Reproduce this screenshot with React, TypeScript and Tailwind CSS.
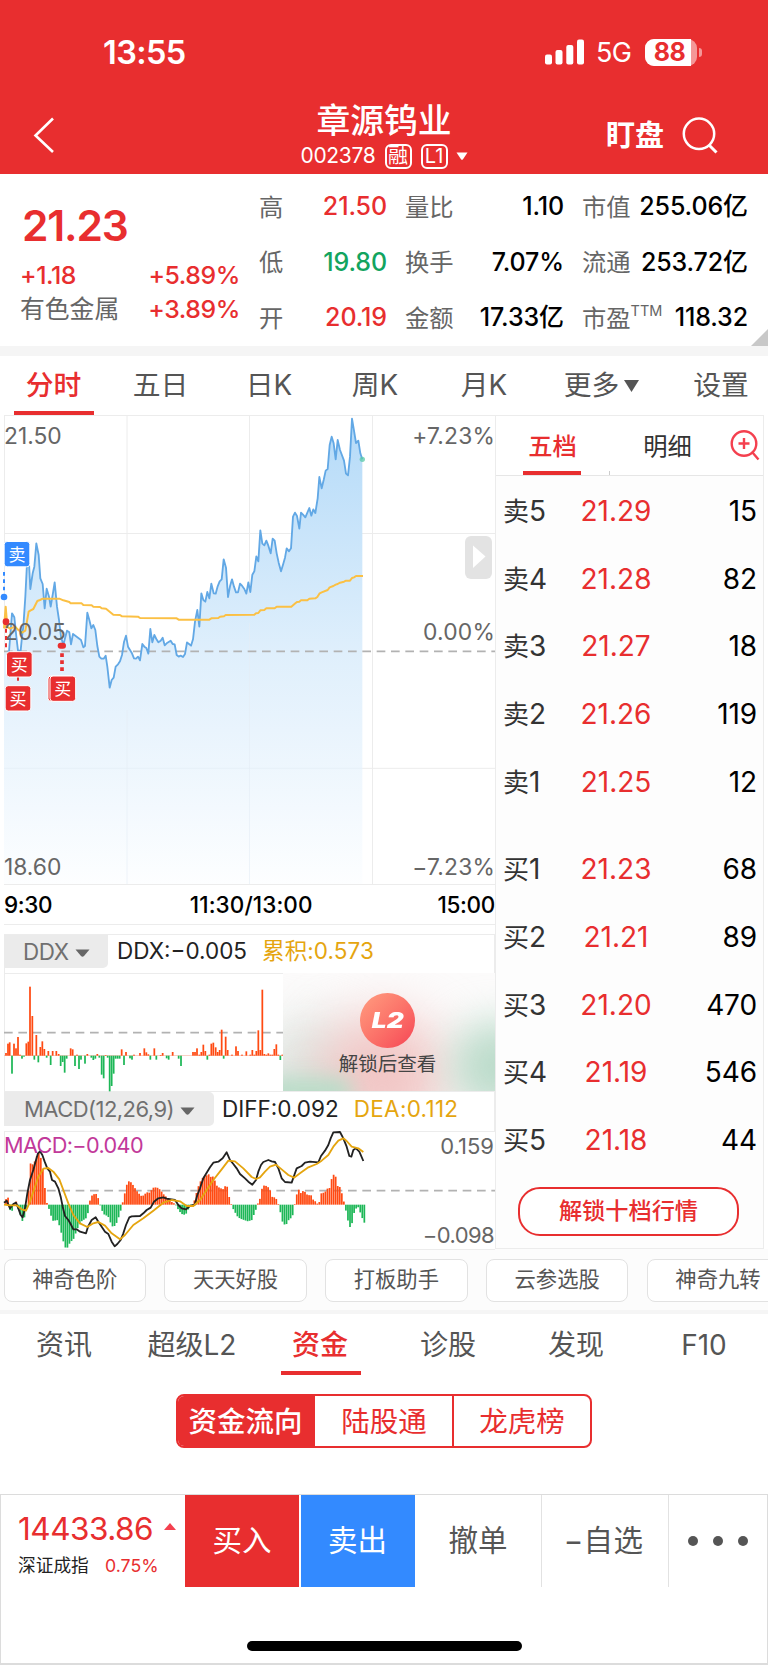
import React from "react";
import clsx from "clsx";

// plot data, three units per css pixel
const PRICE =
  "22,725 27,725 36,610 43,622 49,680 54,722 62,722 66,680 70,650 76,560 82,440 86,440 91,537 98,490 103,470 109,400 116,435 121,505 128,522 134,595 140,536 147,560 152,590 158,555 164,517 171,590 177,630 183,680 190,705 195,685 201,662 208,667 213,703 219,672 243,690 250,712 255,708 262,608 268,630 274,655 280,645 286,660 292,708 298,740 304,746 311,746 317,737 322,770 329,833 335,810 341,803 347,770 354,763 360,754 366,735 372,696 378,677 384,710 395,728 402,745 408,746 414,740 420,751 427,702 433,710 439,714 445,731 451,657 457,697 463,675 469,687 475,697 482,692 488,683 494,706 500,700 512,692 518,702 524,703 530,735 536,740 542,737 549,741 555,732 561,697 567,702 573,707 579,688 585,635 592,600 598,650 604,550 610,570 616,575 622,546 628,565 634,521 641,550 647,551 653,529 659,514 665,508 671,448 678,473 684,561 690,529 696,508 702,530 708,547 714,547 720,521 726,527 733,537 739,551 745,517 751,546 757,494 763,484 769,439 775,454 781,361 787,401 793,406 799,392 805,407 812,430 818,386 824,392 830,430 836,458 843,484 849,464 855,443 860,415 867,424 873,415 879,320 885,308 891,318 898,356 903,308 909,314 916,322 928,294 934,317 940,298 946,309 953,265 958,201 965,235 971,210 977,182 983,177 989,105 995,80 1001,100 1007,148 1013,90 1020,120 1032,152 1038,191 1044,196 1050,140 1056,26 1062,62 1068,99 1075,92 1081,130 1087,148";

const AVERAGE =
  "12,655 17,590 22,650 30,656 45,650 55,660 66,668 76,662 86,605 92,601 100,597 106,585 112,573 120,570 128,566 178,566 190,571 208,576 212,580 245,580 250,585 275,586 280,590 300,591 305,595 318,596 340,614 360,615 366,619 414,620 420,624 530,625 536,629 628,629 634,625 655,624 660,620 672,619 677,615 763,614 768,610 775,609 781,601 793,600 799,595 824,595 830,590 874,590 886,580 891,576 898,575 903,571 922,571 928,566 946,565 952,561 959,550 965,547 983,540 989,532 1000,528 1007,524 1013,522 1020,518 1032,515 1038,512 1050,512 1056,504 1062,502 1068,498 1089,498";

const DDX: [number, number][] = [
  [18, 609], [24, 581], [29, 577], [36, 671], [42, 581], [48, 595], [54, 561], [60, 614], [66, 626], [72, 620],
  [79, 580], [85, 575], [90, 410], [97, 498], [103, 629], [109, 555], [115, 637], [121, 591], [127, 574], [133, 597],
  [140, 623], [145, 603], [152, 645], [158, 603], [169, 603], [176, 612], [182, 648], [188, 636], [194, 668], [200, 626],
  [212, 595], [218, 598], [225, 648], [231, 614], [237, 657], [243, 629], [255, 641], [262, 612], [274, 623], [280, 630],
  [286, 626], [292, 612], [298, 623], [305, 674], [311, 685], [317, 615], [323, 623], [329, 724], [335, 708], [341, 671],
  [347, 626], [353, 626], [359, 626], [365, 598], [372, 645], [378, 606], [390, 625], [396, 629], [402, 614], [420, 609],
  [433, 595], [439, 607], [445, 613], [451, 629], [463, 595], [469, 629], [482, 615], [488, 609], [500, 625], [506, 629],
  [518, 606], [536, 626], [543, 648], [579, 606], [585, 606], [591, 595], [598, 614], [604, 606], [610, 584], [616, 603],
  [622, 629], [628, 614], [634, 581], [640, 578], [647, 592], [653, 606], [659, 600], [665, 539], [671, 626], [677, 560],
  [683, 600], [696, 614], [708, 589], [714, 603], [726, 614], [739, 604], [751, 614], [757, 600], [763, 614], [769, 603],
  [775, 541], [781, 600], [787, 419], [793, 612], [799, 614], [805, 610], [811, 614], [817, 614], [823, 597], [829, 583],
  [835, 614], [841, 630], [847, 614],
];

// envelope of the MACD histogram
const MACD: [number, number][] = [
  [15, 360], [24, 352], [30, 390], [36, 394], [42, 370], [48, 362], [54, 385], [60, 400], [66, 424], [72, 418],
  [78, 390], [82, 374], [85, 340], [91, 250], [97, 254], [103, 247], [109, 232], [115, 215], [121, 228], [127, 252],
  [133, 308], [139, 364], [145, 380], [151, 400], [157, 420], [163, 426], [169, 415], [176, 430], [182, 450], [188, 476],
  [194, 500], [200, 507], [206, 496], [212, 484], [218, 482], [224, 470], [230, 450], [243, 425], [262, 412], [268, 368],
  [274, 348], [286, 340], [292, 345], [298, 368], [304, 385], [310, 402], [322, 408], [328, 414], [334, 438], [340, 440],
  [347, 436], [353, 420], [360, 400], [366, 376], [371, 355], [377, 328], [383, 304], [390, 304], [396, 310], [402, 320],
  [414, 338], [426, 350], [439, 338], [445, 336], [451, 340], [457, 322], [463, 324], [469, 321], [475, 325], [482, 330],
  [488, 340], [500, 352], [512, 364], [524, 371], [530, 378], [536, 392], [548, 404], [557, 404], [567, 384], [580, 374],
  [586, 350], [598, 310], [610, 290], [622, 285], [628, 282], [634, 294], [640, 288], [646, 306], [652, 320], [665, 326],
  [671, 328], [677, 315], [683, 322], [689, 360], [695, 376], [701, 390], [714, 412], [726, 418], [744, 424], [756, 420],
  [762, 403], [768, 388], [775, 366], [781, 354], [787, 320], [793, 316], [799, 318], [805, 322], [811, 332], [817, 352],
  [824, 352], [830, 358], [836, 376], [842, 400], [848, 428], [854, 434], [860, 432], [866, 420], [873, 414], [879, 404],
  [885, 368], [891, 340], [897, 328], [903, 340], [909, 333], [916, 336], [922, 345], [934, 346], [940, 360], [946, 364],
  [952, 371], [958, 366], [964, 340], [971, 338], [977, 334], [983, 325], [989, 324], [995, 296], [1001, 284], [1007, 290],
  [1013, 318], [1019, 320], [1025, 338], [1031, 362], [1037, 388], [1043, 418], [1049, 442], [1055, 436], [1061, 402],
  [1067, 388], [1073, 378], [1079, 392], [1085, 410], [1093, 428],
];

const DIFF =
  "12,368 20,362 30,385 40,372 48,368 55,385 62,405 68,412 75,385 82,340 90,300 100,270 108,240 114,220 120,214 127,225 134,245 142,265 150,275 156,300 165,305 175,325 182,350 188,380 195,408 205,420 212,432 220,448 230,448 240,455 258,460 264,440 275,420 287,412 295,425 305,440 315,455 325,462 335,485 344,499 352,492 362,480 370,460 378,435 388,412 395,409 420,408 430,400 440,390 452,383 462,365 475,355 490,352 500,356 525,360 535,375 545,385 558,388 570,378 584,374 592,345 600,325 610,295 620,278 630,262 640,248 655,245 668,235 680,217 690,240 700,252 710,265 720,282 735,295 745,305 757,314 768,300 775,275 783,255 790,246 805,240 815,244 825,246 835,265 845,295 855,306 875,308 883,285 890,265 905,258 915,248 930,245 955,247 963,228 975,212 985,195 992,175 1000,157 1020,156 1030,175 1040,200 1048,228 1054,230 1060,210 1068,205 1078,215 1090,243";

const DEA =
  "12,374 30,376 50,376 65,388 78,392 88,370 100,335 115,290 130,266 145,264 160,275 178,298 190,330 205,370 220,405 240,430 262,441 280,430 295,426 315,437 335,460 360,478 375,465 400,435 430,415 460,392 490,368 515,360 540,364 560,378 580,378 600,360 620,330 640,300 665,268 685,242 705,244 730,265 755,291 768,297 780,292 795,275 810,260 828,254 845,268 865,285 882,293 900,280 925,262 950,252 965,242 985,225 1000,200 1015,182 1030,175 1040,183 1055,200 1075,205 1090,216";

function valueAt(x: number) {
  for (let i = 1; i < MACD.length; i++) {
    const [x0, y0] = MACD[i - 1];
    const [x1, y1] = MACD[i];
    if (x <= x1) return y0 + ((y1 - y0) * (x - x0)) / (x1 - x0);
  }
  return MACD[MACD.length - 1][1];
}

const MACD_BARS = Array.from({ length: 176 }, (_, i) => {
  const x = 18 + i * 6.143;
  return [x, valueAt(x)] as [number, number];
});

function Bars({ data, base }: { data: [number, number][]; base: number }) {
  return (
    <>
      {data.map(([x, y]) => (
        <rect
          key={x}
          x={x - 2.6}
          y={Math.min(y, base)}
          width={5.2}
          height={Math.max(Math.abs(y - base), 2)}
          fill={y < base ? "#ff4a12" : "#1db757"}
        />
      ))}
    </>
  );
}

function StatusBar() {
  return (
    <div className="flex h-[104px] items-center pl-[103px] pr-[66px] text-white">
      <span className="w-[442px] pt-[2px] text-[32.5px] leading-none font-semibold tracking-[-0.6px]">13:55</span>
      <svg width="40" height="26" viewBox="0 0 40 26" fill="currentColor">
        <rect x="0" y="15.5" width="7" height="10" rx="2" />
        <rect x="10.5" y="11" width="7" height="14.5" rx="2" />
        <rect x="21.3" y="6" width="7" height="19.5" rx="2" />
        <rect x="32" y="0.5" width="7" height="25" rx="2" />
      </svg>
      <span className="ml-[11px] pt-[2px] text-[27px] leading-[32px] tracking-[-0.6px]">5G</span>
      <div className="mr-[5px] ml-auto flex h-[27px] w-[52px] items-center rounded-[9px] bg-white/50">
        <span className="flex h-full w-[46px] items-center justify-center rounded-l-[9px] bg-white pl-[3px] text-[25px] leading-[27px] font-bold tracking-[-0.5px] text-[#e82e2f]">88</span>
      </div>
      <span className="-ml-[3px] h-[9px] w-[3px] rounded-r-full bg-white/50" />
    </div>
  );
}

function TitleBar() {
  return (
    <div className="flex h-[70px] text-white">
      <svg className="ml-[32px] mt-[13px]" width="24" height="36" viewBox="0 0 24 36" fill="none" stroke="currentColor" strokeWidth="2.6">
        <path d="M21 1.5 3.5 18.5 21 35" />
      </svg>
      <div className="ml-[204px] flex w-[248px] flex-col items-center">
        <h1 className="text-[33.8px] leading-[34px] font-medium">章源钨业</h1>
        <div className="mt-[5px] flex items-center whitespace-nowrap">
          <span className="text-[21px] leading-[26px] tracking-[-0.3px]">002378</span>
          <span className="ml-[9px] flex h-[25px] w-[27px] items-center justify-center rounded-[6px] border-2 border-white text-[20px] leading-none">融</span>
          <span className="ml-[9px] flex h-[25px] w-[27px] items-center justify-center rounded-[6px] border-2 border-white text-[20px] leading-none">L1</span>
          <svg className="ml-[8px]" width="12" height="8" viewBox="0 0 12 8" fill="currentColor">
            <path d="M0.5 0.5h11L7 7.3q-1 1-2 0z" />
          </svg>
        </div>
      </div>
      <span className="ml-[98px] mt-[17px] text-[29px] leading-[29px] font-bold">盯盘</span>
      <svg className="ml-[17px] mt-[13px]" width="38" height="38" viewBox="0 0 38 38" fill="none" stroke="currentColor" strokeWidth="2.5">
        <circle cx="18" cy="16.8" r="15.2" />
        <path d="M28.500 28.500 35.500 35.500" strokeWidth="3" />
      </svg>
    </div>
  );
}

type Stat = { label: React.ReactNode; value: string; tone?: string };

function StatColumn({ items, className }: { items: Stat[]; className: string }) {
  return (
    <div className={clsx("flex flex-col", className)}>
      {items.map((item, i) => (
        <div key={i} className="flex h-[55.500px] items-center justify-between whitespace-nowrap">
          <span className="text-[24.3px] leading-none text-[#666]">{item.label}</span>
          <span className={clsx("text-[25px] leading-none font-medium tracking-[-0.1px]", item.tone ?? "text-black")}>{item.value}</span>
        </div>
      ))}
    </div>
  );
}

function Quote() {
  return (
    <section className="relative flex h-[172px] bg-white">
      <div className="w-[240px] pl-[20px] pt-[30px] font-medium text-[#e82e2f]">
        <div className="pl-[2px] text-[42.5px] leading-[43px] font-semibold tracking-[-1.2px]">21.23</div>
        <div className="mt-[12px] flex h-[34px] items-center justify-between text-[24.8px] tracking-[-0.4px]">
          <span>+1.18</span>
          <span>+5.89%</span>
        </div>
        <div className="flex h-[34px] items-center justify-between text-[24.8px] tracking-[-0.4px]">
          <span className="font-normal tracking-normal text-[#666]">有色金属</span>
          <span>+3.89%</span>
        </div>
      </div>
      <StatColumn
        className="ml-[19px] w-[128px] pt-[5px]"
        items={[
          { label: "高", value: "21.50", tone: "text-[#e82e2f]" },
          { label: "低", value: "19.80", tone: "text-[#12a45f]" },
          { label: "开", value: "20.19", tone: "text-[#e82e2f]" },
        ]}
      />
      <StatColumn
        className="ml-[18px] w-[159px] pt-[5px]"
        items={[
          { label: "量比", value: "1.10" },
          { label: "换手", value: "7.07%" },
          { label: "金额", value: "17.33亿" },
        ]}
      />
      <StatColumn
        className="ml-[18px] w-[166px] pt-[5px]"
        items={[
          { label: "市值", value: "255.06亿" },
          { label: "流通", value: "253.72亿" },
          { label: <>市盈<span className="relative -top-[11px] text-[14.500px]">TTM</span></>, value: "118.32" },
        ]}
      />
      <svg className="absolute right-0 bottom-0" width="17" height="17" viewBox="0 0 17 17">
        <path d="M17 0v17H0z" fill="#c8c8c8" />
      </svg>
    </section>
  );
}

function PeriodTabs() {
  return (
    <nav className="flex h-[59px] overflow-hidden bg-white text-[27.8px] leading-none text-[#555]">
      <span className="relative flex w-[107px] shrink-0 items-center justify-center pt-px font-medium text-[#e82e2f]">
        分时
        <i className="absolute bottom-0 left-[14px] h-[4px] w-[80px] bg-[#e82e2f]" />
      </span>
      <span className="flex w-[107px] shrink-0 items-center justify-center pt-px">五日</span>
      <span className="flex w-[110px] shrink-0 items-center justify-center pt-px">日K</span>
      <span className="flex w-[102px] shrink-0 items-center justify-center pt-px">周K</span>
      <span className="flex w-[116px] shrink-0 items-center justify-center pt-px">月K</span>
      <span className="flex w-[119px] shrink-0 items-center justify-center pt-px">
        更多
        <svg className="ml-[5px]" width="15" height="12" viewBox="0 0 15 12" fill="#555">
          <path d="M0 0h15L7.5 12z" />
        </svg>
      </span>
      <span className="flex w-[120px] shrink-0 items-center justify-center pt-px">设置</span>
    </nav>
  );
}

function Tag({ x, y, text, fill }: { x: number; y: number; text: string; fill: string }) {
  return (
    <g>
      <rect x={x} y={y} width="77" height="76" rx="9" fill={fill} stroke="#fff" strokeWidth="3" />
      <text x={x + 38.5} y={y + 57} textAnchor="middle" fontSize="51" fill="#fff">{text}</text>
    </g>
  );
}

function PriceChart() {
  return (
    <div className="relative h-[470px] text-[22.8px] leading-none text-[#666]">
      <svg className="block overflow-visible" width="491" height="470" viewBox="12 15 1473 1410" fill="none">
        <defs>
          <linearGradient id="area" x1="0" y1="26" x2="0" y2="1425" gradientUnits="userSpaceOnUse">
            <stop offset="0" stopColor="#b4daf8" />
            <stop offset="0.5" stopColor="#dfeffc" />
            <stop offset="1" stopColor="#fdfeff" />
          </linearGradient>
        </defs>
        <path d="M12 370.5H1485M12 1075H1485M13.500 15V1425M381 15V1425M748.500 15V1425M1117.500 15V1425" stroke="#ececec" strokeWidth="3" />
        <path d={`M12,1425 L12,725 L${PRICE} L1087,1425Z`} fill="url(#area)" />
        <path d="M381 900V1425M748.500 640V1425M12 1075H1087" stroke="#e4edf5" strokeWidth="3" opacity="0.6" />
        <path d="M12 16.500H1485M12 1423.500H1485" stroke="#ececec" strokeWidth="3" />
        <path d="M12 724H1485" stroke="#b2b2b2" strokeWidth="5" strokeDasharray="26 17" />
        <polyline points={PRICE} stroke="#62a8e5" strokeWidth="5.500" strokeLinejoin="round" />
        <path d="M12 655 18 590 24 655Z" fill="#fbb93a" />
        <polyline points={AVERAGE} stroke="#fbc044" strokeWidth="6" strokeLinejoin="round" />
        <circle cx="1087" cy="148" r="8" fill="#59c9a8" fillOpacity="0.75" />
      </svg>
      <span className="absolute left-0 top-[10px]">21.50</span>
      <span className="absolute right-0 top-[10px] tracking-[0.2px]">+7.23%</span>
      <span className="absolute left-0 top-[206px]">20.05</span>
      <span className="absolute right-0 top-[206px] tracking-[0.2px]">0.00%</span>
      <span className="absolute left-0 top-[441px]">18.60</span>
      <span className="absolute right-0 top-[441px] tracking-[0.2px]">−7.23%</span>
      {/* trade marks lie over the axis labels */}
      <svg className="absolute left-0 top-0 overflow-visible" width="491" height="470" viewBox="12 15 1473 1410" fill="none">
        <path d="M12 486V550" stroke="#338aff" strokeWidth="6" strokeDasharray="11 11" />
        <circle cx="12" cy="561" r="10" fill="#338aff" />
        <Tag x={12.500} y={394.500} text="卖" fill="#338aff" />
        <path d="M18 656V720M54 800V812" stroke="#e82e2f" strokeWidth="6" strokeDasharray="12 10" />
        <circle cx="18" cy="635" r="10" fill="#e82e2f" />
        <path d="M186 730V785" stroke="#e82e2f" strokeWidth="11" strokeDasharray="11 10" />
        <rect x="173" y="698" width="25" height="18" rx="9" fill="#e82e2f" />
        <Tag x={19.500} y={725} text="买" fill="#e82e2f" />
        <Tag x={15.500} y={827} text="买" fill="#e82e2f" />
        <Tag x={144} y={798} text="买" fill="#e82e2f" />
        <Tag x={150} y={798} text="买" fill="#e82e2f" />
      </svg>
      <svg className="absolute right-[3px] top-[121px]" width="27" height="43" viewBox="0 0 27 43">
        <rect width="27" height="43" rx="6" fill="#e3e3e3" />
        <path d="M8 9.500 20.500 20.500 8 32z" fill="#fff" />
      </svg>
    </div>
  );
}

function Caret() {
  return (
    <svg className="mt-[3px]" width="15" height="8" viewBox="0 0 15 8" fill="#666">
      <path d="M0.5 0.5h14L9 7q-1.500 1.500-3 0z" />
    </svg>
  );
}

function DdxChart() {
  return (
    <>
      <div className="flex h-[39px] border-t border-r border-l border-[#ececec] text-[22.5px] leading-[32px] whitespace-nowrap">
        <div className="-ml-px flex h-[33px] w-[104px] items-center rounded-br-[5px] bg-[#ebebeb] pl-[19px] text-[22.4px] text-[#707070]">
          <span className="w-[52px] tracking-[-0.4px]">DDX</span>
          <Caret />
        </div>
        <span className="ml-[9px] text-[#222]">DDX:−0.005</span>
        <span className="ml-[15px] tracking-[0.1px] text-[#e5a50f]">累积:0.573</span>
      </div>
      <div className="relative h-[118px]">
        <svg className="block overflow-visible" width="491" height="118" viewBox="12 369 1473 354" fill="none">
          <path d="M12 370.500H1485M13.500 369V723" stroke="#ececec" strokeWidth="3" />
          <path d="M12 548H1485" stroke="#b2b2b2" strokeWidth="5" strokeDasharray="26 17" />
          <path d="M12 616.500H848" stroke="#f6a08a" strokeWidth="1.500" />
          <Bars data={DDX} base={617} />
        </svg>
        <div className="absolute top-0 right-0 h-[118px] w-[212px] overflow-hidden bg-[#fcfbfb]">
          <div className="absolute top-[46px] left-[-30px] h-[110px] w-[110px] rounded-full bg-[#dfe6e1] blur-[24px]" />
          <div className="absolute top-[42px] left-[34px] h-[120px] w-[130px] rounded-full bg-[#f1c6c5] blur-[26px]" />
          <div className="absolute top-[104px] left-[-20px] h-[30px] w-[90px] rounded-full bg-[#b9dcc8] blur-[10px]" />
          <div className="absolute top-[48px] left-[168px] h-[90px] w-[90px] rounded-full bg-[#bbdbca] blur-[20px]" />
          <div className="relative flex flex-col items-center pt-[20px] pr-[3px]">
            <div className="flex size-[55px] items-center justify-center rounded-full bg-linear-to-br from-[#ff9d80] to-[#f54255]">
              <span className="scale-x-[1.25] text-[21px] leading-none font-black text-white italic">L2</span>
            </div>
            <span className="mt-[3px] text-[19.5px] leading-[26px] text-[#444]">解锁后查看</span>
          </div>
        </div>
      </div>
    </>
  );
}

function MacdChart() {
  return (
    <>
      <div className="flex h-[40px] border-t border-r border-[#ececec] text-[22.5px] leading-[33px] whitespace-nowrap">
        <div className="flex h-[34px] w-[210px] items-center rounded-r-[5px] bg-[#ebebeb] pl-[20px] text-[22px] text-[#707070]">
          <span className="w-[156px] tracking-[-0.55px]">MACD(12,26,9)</span>
          <Caret />
        </div>
        <span className="ml-[8px] text-[#222]">DIFF:0.092</span>
        <span className="ml-[15px] tracking-[0.3px] text-[#e5a50f]">DEA:0.112</span>
      </div>
      <div className="relative h-[119px] text-[22px] leading-none text-[#666]">
        <svg className="block overflow-visible" width="491" height="119" viewBox="12 153 1473 357" fill="none">
          <path d="M12 154.500H1485M13.500 153V510M12 508.500H1485" stroke="#ececec" strokeWidth="3" />
          <path d="M12 332H1485" stroke="#b2b2b2" strokeWidth="5" strokeDasharray="26 17" />
          <Bars data={MACD_BARS} base={374} />
          <polyline points={DIFF} stroke="#222" strokeWidth="5.500" strokeLinejoin="round" />
          <polyline points={DEA} stroke="#e5a50f" strokeWidth="5.500" strokeLinejoin="round" />
        </svg>
        <span className="absolute top-[4px] left-0 text-[21.700px] tracking-[-0.650px] text-[#c2399a]">MACD:−0.040</span>
        <span className="absolute top-[4px] right-px">0.159</span>
        <span className="absolute right-px bottom-[4px] tracking-[-0.6px]">−0.098</span>
      </div>
    </>
  );
}

const SELLS = [
  ["卖5", "21.29", "15"],
  ["卖4", "21.28", "82"],
  ["卖3", "21.27", "18"],
  ["卖2", "21.26", "119"],
  ["卖1", "21.25", "12"],
];

const BUYS = [
  ["买1", "21.23", "68"],
  ["买2", "21.21", "89"],
  ["买3", "21.20", "470"],
  ["买4", "21.19", "546"],
  ["买5", "21.18", "44"],
];

function Orders({ rows }: { rows: string[][] }) {
  return (
    <div>
      {rows.map(([name, price, volume]) => (
        <div key={name} className="flex h-[67.7px] items-center pr-[6px] pl-[7px] text-[28px] leading-none">
          <span className="w-[67px] text-[26px] text-[#333]"><span>{name[0]}</span><span className="text-[28px]">{name[1]}</span></span>
          <span className="w-[92px] text-center text-[#e82e2f]">{price}</span>
          <span className="flex-1 text-right tracking-[-0.1px] text-black">{volume}</span>
        </div>
      ))}
    </div>
  );
}

function OrderBook() {
  return (
    <aside className="flex h-[834px] w-[269px] flex-col border border-[#ececec] bg-[#fdfdfd]">
      <div className="flex h-[60px] border-b border-[#e6e6e6] bg-white text-[24.3px] leading-none">
        <span className="relative flex w-[113px] items-center justify-center pt-[2px] font-medium text-[#e82e2f]">
          五档
          <i className="absolute bottom-0 left-[27px] h-[4px] w-[58px] bg-[#e82e2f]" />
        </span>
        <i className="h-[4px] w-px self-end bg-[#ccc]" />
        <span className="flex w-[115px] items-center justify-center pt-[2px] text-[#333]">明细</span>
        <svg className="mt-[12px] ml-[5px]" width="32" height="34" viewBox="0 0 32 34" fill="none" stroke="#f4404f" strokeWidth="2.4">
          <circle cx="14" cy="15.500" r="12.300" />
          <path d="M14 10v11M8.500 15.500h11M22.500 24.500 28.500 31.500" />
        </svg>
      </div>
      <div className="pt-[1px]">
        <Orders rows={SELLS} />
      </div>
      <div className="mt-[20px]">
        <Orders rows={BUYS} />
      </div>
      <button className="mt-[13px] ml-[22px] h-[49px] w-[221px] rounded-[22px] border-2 border-[#e82e2f] bg-white pt-px text-[23.2px] leading-none font-medium text-[#e82e2f]">
        解锁十档行情
      </button>
    </aside>
  );
}

function Chips() {
  return (
    <div className="flex h-[61px] gap-[18.300px] overflow-hidden bg-[#fcfcfc] pt-[9.500px] pl-[3.500px]">
      {["神奇色阶", "天天好股", "打板助手", "云参选股", "神奇九转"].map((name) => (
        <span key={name} className="flex h-[43px] w-[142.500px] shrink-0 items-center justify-center rounded-[8px] border border-[#e2e2e2] bg-white text-[21.3px] leading-none text-[#555]">
          {name}
        </span>
      ))}
    </div>
  );
}

function InfoTabs() {
  return (
    <nav className="grid h-[64px] grid-cols-6 text-[28px] leading-none text-[#555]">
      {["资讯", "超级L2", "资金", "诊股", "发现", "F10"].map((name) => (
        <span
          key={name}
          className={clsx("relative flex items-center justify-center pb-[2px]", name === "资金" && "font-medium text-[#e82e2f]")}
        >
          {name}
          {name === "资金" && <i className="absolute bottom-[3px] left-[25px] h-[4px] w-[80px] bg-[#e82e2f]" />}
        </span>
      ))}
    </nav>
  );
}

function FundSwitch() {
  return (
    <div className="mx-auto mt-[16px] flex h-[54px] w-[416px] overflow-hidden rounded-[8px] border-2 border-[#e82e2f] text-[28.5px] leading-none text-[#e82e2f]">
      <span className="flex w-[137px] items-center justify-center bg-[#e82e2f] pt-[2px] pr-[2px] font-medium text-white">资金流向</span>
      <span className="flex w-[139px] items-center justify-center border-r-2 border-[#e82e2f] pt-[2px] pl-px">陆股通</span>
      <span className="flex flex-1 items-center justify-center pt-[2px]">龙虎榜</span>
    </div>
  );
}

function TradeBar() {
  return (
    <footer className="mt-auto h-[171px] border border-b-2 border-[#dcdcdc] bg-white">
      <div className="flex h-[92px] text-[29.5px] leading-none text-[#555]">
        <div className="w-[184px] pt-[18px] pl-[17px] text-[#e82e2f]">
          <div className="flex items-center">
            <span className="w-[146px] text-[31.5px] leading-[32px] tracking-[-0.5px]">14433.86</span>
            <svg width="12" height="7" viewBox="0 0 12 7" className="-mt-[6px]">
              <path d="M6 0l6 7H0z" fill="#f4404f" />
            </svg>
          </div>
          <div className="mt-[12px] flex items-center text-[17.700px] leading-[18px]">
            <span className="w-[87px] text-[#222]">深证成指</span>
            <span>0.75%</span>
          </div>
        </div>
        <span className="flex w-[114px] items-center justify-center bg-[#e82e2f] text-white">买入</span>
        <span className="ml-[2px] flex w-[114px] items-center justify-center bg-[#338aff] pr-px text-white">卖出</span>
        <span className="flex w-[127px] items-center justify-center border-r border-[#e2e2e2]">撤单</span>
        <span className="flex w-[127px] items-center justify-center border-r border-[#e2e2e2] pr-[3px] tracking-[0.4px]">−自选</span>
        <span className="flex flex-1 items-center justify-center gap-[15px] pr-px">
          <i className="size-[10px] rounded-full bg-[#555]" />
          <i className="size-[10px] rounded-full bg-[#555]" />
          <i className="size-[10px] rounded-full bg-[#555]" />
        </span>
      </div>
      <div className="mx-auto mt-[54px] h-[10px] w-[275px] rounded-full bg-black" />
    </footer>
  );
}

export default function App() {
  return (
    <main className="flex h-[1665px] w-[768px] flex-col overflow-hidden bg-white font-['Inter','Noto_Sans_CJK_SC',sans-serif]">
      <header className="h-[174px] bg-[#e82e2f]">
        <StatusBar />
        <TitleBar />
      </header>
      <Quote />
      <div className="h-[10px] bg-[#f5f5f5]" />
      <PeriodTabs />
      <div className="flex h-[834px] bg-white pl-[4px]">
        <div className="w-[491px]">
          <PriceChart />
          <div className="mb-[9px] flex h-[40px] items-center justify-between border-b border-[#ececec] pt-[2px] text-[22.5px] leading-none font-medium text-black">
            <span className="w-[56px] tracking-[-0.4px]">9:30</span>
            <span className="pl-[5px] tracking-[0.1px]">11:30/13:00</span>
            <span className="tracking-[-0.3px]">15:00</span>
          </div>
          <DdxChart />
          <MacdChart />
        </div>
        <OrderBook />
      </div>
      <Chips />
      <div className="h-[4px] bg-[#f5f5f5]" />
      <InfoTabs />
      <FundSwitch />
      <TradeBar />
    </main>
  );
}
